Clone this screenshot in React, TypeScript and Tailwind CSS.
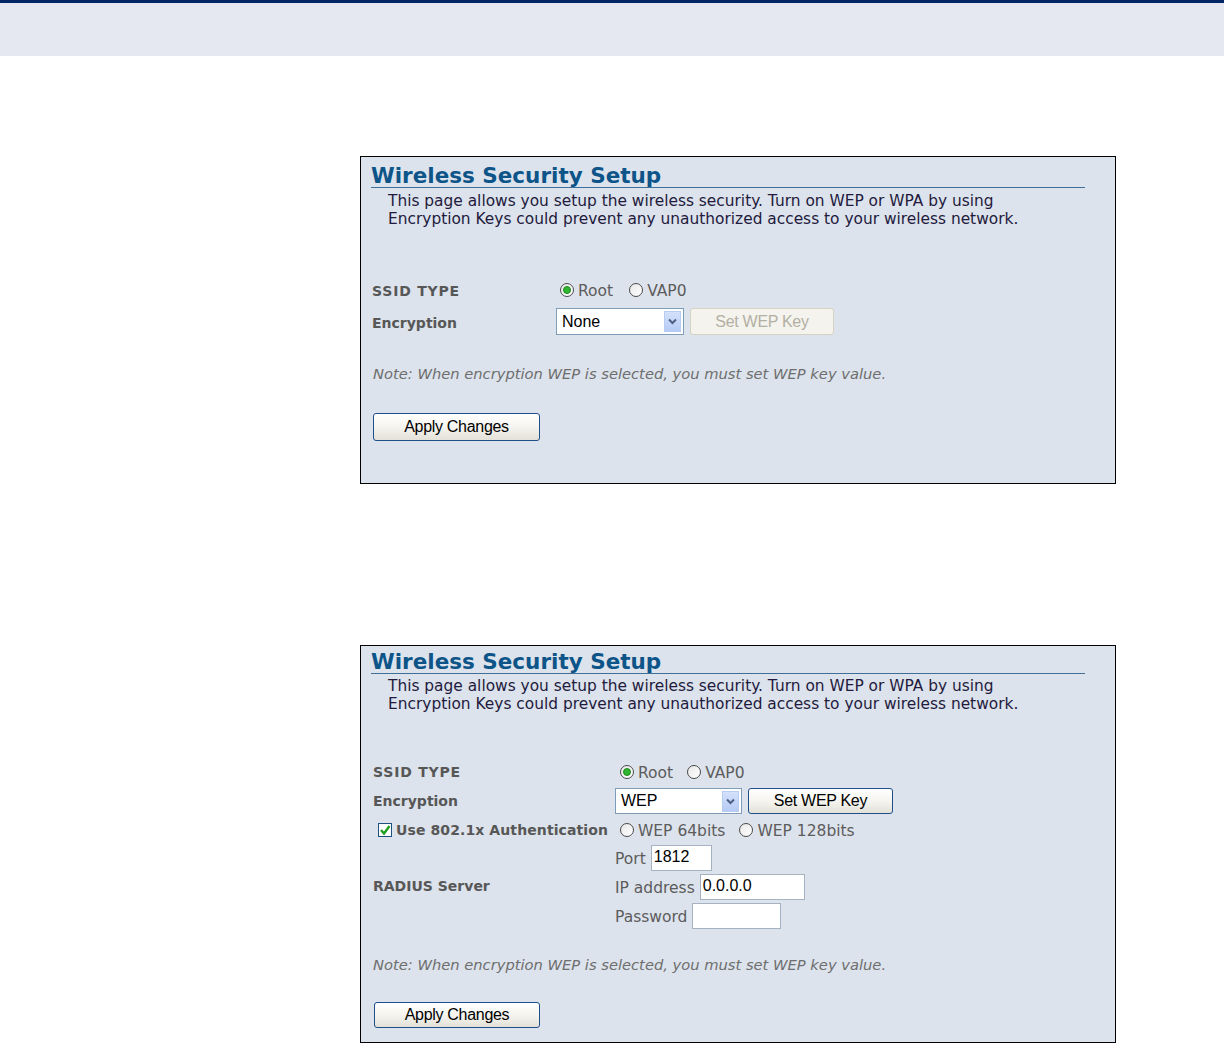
import React from "react";

const V = { fontFamily: '"DejaVu Sans", Verdana, sans-serif' };
const A = { fontFamily: '"Liberation Sans", Arial, sans-serif' };

function Radio({ checked }: { checked?: boolean }) {
  return (
    <span className="inline-flex items-center justify-center w-[14px] h-[14px] rounded-full border border-[#4a4a4a] bg-gradient-to-br from-[#e8e8e8] to-white mr-[4px] shrink-0">
      {checked && <span className="w-[8px] h-[8px] rounded-full bg-[#2fb52f] border border-[#1f8a1f]" />}
    </span>
  );
}

function Select({ value, w }: { value: string; w: string }) {
  return (
    <div className={`flex items-center justify-between bg-white border border-[#7f9db9] ${w} h-full pl-[5px] pr-[2px]`}>
      <span style={A} className="text-[16px] text-black">{value}</span>
      <span className="w-[17px] h-[21px] bg-gradient-to-b from-[#d4e1fb] to-[#b5cbf5] border border-[#b8cbf0] flex items-center justify-center">
        <svg width="9" height="7" viewBox="0 0 9 7"><path d="M1 1.5 L4.5 5 L8 1.5" stroke="#4d6185" strokeWidth="2" fill="none" /></svg>
      </span>
    </div>
  );
}

function Btn({ children, disabled, w, h }: { children: React.ReactNode; disabled?: boolean; w: string; h: string }) {
  return (
    <div
      style={A}
      className={`${w} ${h} flex items-center justify-center rounded-[3px] text-[16px] tracking-[-0.3px] ${
        disabled
          ? "border border-[#d6d3c3] bg-[#f4f3ee] text-[#b3b0a3]"
          : "border border-[#1f4f8a] bg-gradient-to-b from-white via-[#f5f4ef] to-[#e3e1d8] text-black"
      }`}
    >
      {children}
    </div>
  );
}

function Input({ value, w }: { value?: string; w: string }) {
  return (
    <div style={A} className={`${w} h-[26px] bg-white border border-[#a5b2c2] text-[16px] leading-[22px] pl-[2px] text-black`}>
      {value}
    </div>
  );
}

function Title({ pt }: { pt: string }) {
  return (
    <div className={`${pt} pl-[10px] pr-[30px]`}>
      <div style={V} className="h-[27px] leading-[29px] text-[21.5px] font-bold text-[#0d5488] border-b border-[#3f6e99]">
        Wireless Security Setup
      </div>
    </div>
  );
}

function Desc({ mt }: { mt: string }) {
  return (
    <div style={V} className={`${mt} pl-[27px] text-[15.4px] leading-[18px] text-[#231a3d]`}>
      <div>This page allows you setup the wireless security. Turn on WEP or WPA by using</div>
      <div>Encryption Keys could prevent any unauthorized access to your wireless network.</div>
    </div>
  );
}

const Note = ({ mt }: { mt: string }) => (
  <div style={V} className={`${mt} pl-[12px] text-[14.7px] leading-[18px] italic text-[#6e6e6e]`}>
    Note: When encryption WEP is selected, you must set WEP key value.
  </div>
);

const Label = ({ children }: { children: React.ReactNode }) => (
  <span style={V} className="text-[14px] font-bold text-[#575757]">{children}</span>
);

const RText = ({ children }: { children: React.ReactNode }) => (
  <span style={V} className="text-[15.5px] text-[#5c5c5c] leading-[18px] pt-[2px]">{children}</span>
);

export default function App() {
  return (
    <div className="w-[1224px] h-[1043px] bg-white overflow-hidden">
      <div className="h-[3px] bg-[#002466]" />
      <div className="h-[53px] bg-[#e5e8f1]" />

      {/* Panel 1 */}
      <div className="mt-[100px] ml-[360px] w-[756px] h-[328px] border border-black bg-[#dce3ec]">
        <Title pt="pt-[4px]" />
        <Desc mt="mt-[4px]" />
        <div className="mt-[49px] pl-[11px] flex flex-col gap-[4px]">
          <div className="flex items-center h-[26px]">
            <div className="w-[188px]"><Label><span className="tracking-[0.8px]">SSID TYPE</span></Label></div>
            <div className="flex items-center">
              <Radio checked /><RText>Root</RText>
              <span className="w-[16px]" />
              <Radio /><RText>VAP0</RText>
            </div>
          </div>
          <div className="flex items-center h-[29px]">
            <div className="w-[184px]"><Label>Encryption</Label></div>
            <div className="flex items-center h-[27px] gap-[6px]">
              <Select value="None" w="w-[128px]" />
              <Btn disabled w="w-[144px]" h="h-[27px]">Set WEP Key</Btn>
            </div>
          </div>
        </div>
        <Note mt="mt-[29px]" />
        <div className="mt-[30px] pl-[12px]">
          <Btn w="w-[167px]" h="h-[28px]">Apply Changes</Btn>
        </div>
      </div>

      {/* Panel 2 */}
      <div className="mt-[161px] ml-[360px] w-[756px] h-[398px] border border-black bg-[#dce3ec]">
        <Title pt="pt-[1px]" />
        <Desc mt="mt-[3px]" />
        <div className="mt-[45px] pl-[12px] grid grid-cols-[242px_1fr]">
          <div className="h-[28px] flex items-center"><Label><span className="tracking-[0.8px]">SSID TYPE</span></Label></div>
          <div className="h-[28px] flex items-center pl-[5px]">
            <Radio checked /><RText>Root</RText>
            <span className="w-[14px]" />
            <Radio /><RText>VAP0</RText>
          </div>

          <div className="h-[30px] flex items-center"><Label>Encryption</Label></div>
          <div className="h-[30px] flex items-center">
            <div className="h-[26px] flex items-center gap-[6px]">
              <Select value="WEP" w="w-[127px]" />
              <Btn w="w-[145px]" h="h-[26px]">Set WEP Key</Btn>
            </div>
          </div>

          <div className="h-[28px] flex items-center pl-[5px]">
            <span className="w-[14px] h-[14px] border border-[#1c5180] bg-white flex items-center justify-center mr-[4px]">
              <svg width="12" height="12" viewBox="0 0 12 12"><path d="M2 6 L5 9.5 L10.5 2" stroke="#21a121" strokeWidth="2.4" fill="none" /></svg>
            </span>
            <Label><span className="tracking-[0.1px]">Use 802.1x Authentication</span></Label>
          </div>
          <div className="h-[28px] flex items-center pl-[5px]">
            <Radio /><RText>WEP 64bits</RText>
            <span className="w-[14px]" />
            <Radio /><RText>WEP 128bits</RText>
          </div>

          <div className="flex items-center"><Label>RADIUS Server</Label></div>
          <div className="flex flex-col gap-[3px] pt-[1px]">
            <div className="h-[26px] flex items-center gap-[5px]"><RText>Port</RText><Input value="1812" w="w-[61px]" /></div>
            <div className="h-[26px] flex items-center gap-[5px]"><RText>IP address</RText><Input value="0.0.0.0" w="w-[105px]" /></div>
            <div className="h-[26px] flex items-center gap-[5px]"><RText>Password</RText><Input w="w-[89px]" /></div>
          </div>
        </div>
        <Note mt="mt-[27px]" />
        <div className="mt-[28px] pl-[13px]">
          <Btn w="w-[166px]" h="h-[26px]">Apply Changes</Btn>
        </div>
      </div>
    </div>
  );
}
